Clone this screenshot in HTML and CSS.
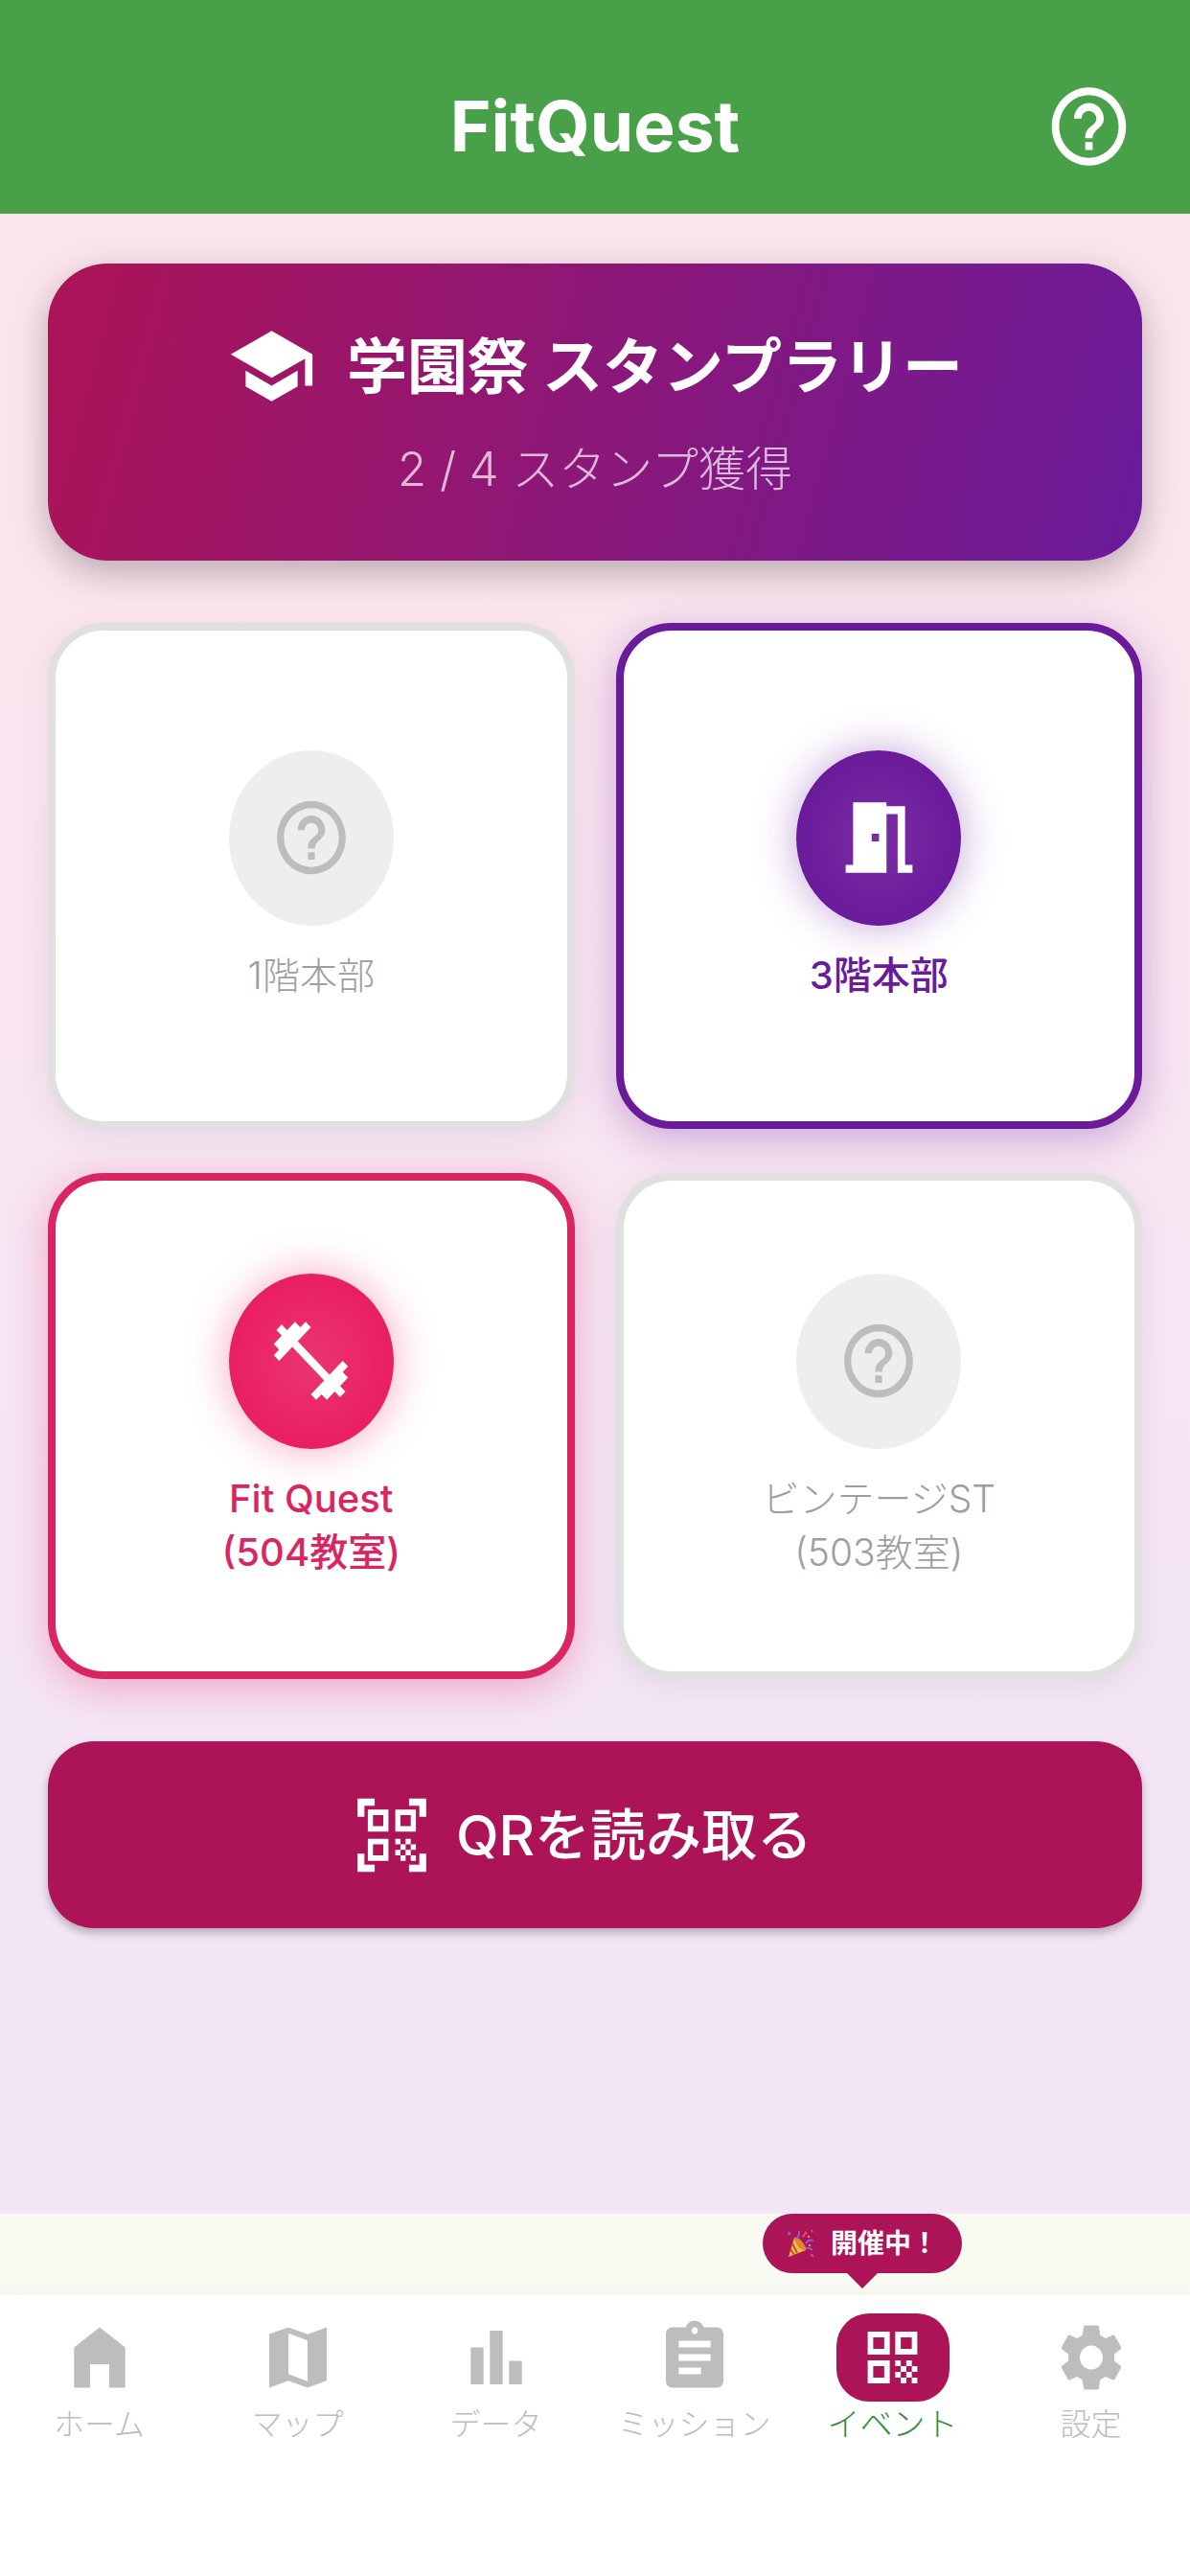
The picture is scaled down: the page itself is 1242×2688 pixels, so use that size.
FILE: index.html
```html
<!DOCTYPE html>
<html lang="ja">
<head>
  <meta charset="utf-8">
  <meta name="viewport" content="width=device-width, initial-scale=1">
  <title>FitQuest</title>
  <link rel="stylesheet" href="styles.css">
</head>
<body>
  <svg class="symbols" aria-hidden="true">
    <symbol id="help" viewBox="0 0 24 24" preserveAspectRatio="none"><path d="M11 18h2v-2h-2v2zm1-16C6.48 2 2 6.48 2 12s4.48 10 10 10 10-4.48 10-10S17.52 2 12 2zm0 18c-4.41 0-8-3.59-8-8s3.59-8 8-8 8 3.590 8 8-3.590 8-8 8zm0-14c-2.210 0-4 1.790-4 4h2c0-1.100.9-2 2-2s2 .9 2 2c0 2-3 1.750-3 5h2c0-2.250 3-2.500 3-5 0-2.210-1.790-4-4-4z"/></symbol>
  </svg>

  <header class="app-bar">
    <h1 class="app-title">FitQuest</h1>
    <button class="help-button" type="button" aria-label="ヘルプ">
      <svg class="icon-large" aria-hidden="true"><use href="#help"/></svg>
    </button>
  </header>

  <main class="content">
    <section class="hero">
      <h2 class="hero-title">
        <svg class="icon-large" viewBox="0 0 24 24" preserveAspectRatio="none" aria-hidden="true"><path d="M5 13.180v4L12 21l7-3.820v-4L12 17l-7-3.820zM12 3L1 9l11 6 9-4.910V17h2V9L12 3z"/></svg>
        <span>学園祭 スタンプラリー</span>
      </h2>
      <p class="hero-count">2 / 4 スタンプ獲得</p>
    </section>

    <section class="stamps">
      <article class="stamp">
        <div class="stamp-disc"><svg class="icon-locked" aria-hidden="true"><use href="#help"/></svg></div>
        <p class="stamp-label">1階本部</p>
      </article>
      <article class="stamp stamp-done stamp-purple">
        <div class="stamp-disc"><svg class="icon-large" viewBox="0 0 24 24" preserveAspectRatio="none" aria-hidden="true"><path d="M14 6v15H3v-2h2V3h9v1h5v15h2v2h-4V6h-3zm-4 5v2h2v-2h-2z"/></svg></div>
        <p class="stamp-label">3階本部</p>
      </article>
      <article class="stamp stamp-done stamp-pink">
        <div class="stamp-disc"><svg class="icon-large" viewBox="0 0 24 24" preserveAspectRatio="none" aria-hidden="true"><path d="M20.570 14.860L22 13.430 20.570 12 17 15.570 8.430 7 12 3.430 10.570 2 9.140 3.430 7.710 2 5.570 4.140 4.140 2.710 2.710 4.140l1.430 1.430L2 7.710l1.430 1.430L2 10.570 3.430 12 7 8.430 15.570 17 12 20.570 13.430 22l1.430-1.430L16.290 22l2.140-2.140 1.430 1.430 1.430-1.430-1.430-1.430L22 16.290z"/></svg></div>
        <p class="stamp-label">Fit Quest<br>(504教室)</p>
      </article>
      <article class="stamp">
        <div class="stamp-disc"><svg class="icon-locked" aria-hidden="true"><use href="#help"/></svg></div>
        <p class="stamp-label">ビンテージST<br>(503教室)</p>
      </article>
    </section>

    <button class="scan-button" type="button">
      <svg class="icon-locked" viewBox="0 0 24 24" preserveAspectRatio="none" aria-hidden="true"><path d="M9.500 6.500v3h-3v-3h3M11 5H5v6h6V5zm-1.500 9.500v3h-3v-3h3M11 13H5v6h6v-6zm6.500-6.500v3h-3v-3h3M19 5h-6v6h6V5zm-6 8h1.500v1.500H13V13zm1.500 1.500H16V16h-1.500v-1.500zM16 13h1.500v1.500H16V13zm-3 3h1.500v1.500H13V16zm1.500 1.500H16V19h-1.500v-1.500zM16 16h1.500v1.500H16V16zm1.500-1.500H19V16h-1.500v-1.500zm0 3H19V19h-1.500v-1.500zM22 7h-2V4h-3V2h5v5zm0 15v-5h-2v3h-3v2h5zM2 22h5v-2H4v-3H2v5zM2 2v5h2V4h3V2H2z"/></svg>
      <span>QRを読み取る</span>
    </button>
  </main>

  <nav class="tabs">
    <a class="tab" href="#home">
      <span class="tab-icon"><svg class="icon-tab" viewBox="0 0 24 24" preserveAspectRatio="none" aria-hidden="true"><path d="M4 21V9l8-6 8 6v12h-5v-7H9v7z"/></svg></span>
      <span class="tab-label">ホーム</span>
    </a>
    <a class="tab" href="#map">
      <span class="tab-icon"><svg class="icon-tab" viewBox="0 0 24 24" preserveAspectRatio="none" aria-hidden="true"><path fill-rule="evenodd" d="M3 21V5l6-2 6 2.100L21 3v15.900L15 21l-6-2.100zM9 4.800v12.100l6 2.200V6.900z"/></svg></span>
      <span class="tab-label">マップ</span>
    </a>
    <a class="tab" href="#data">
      <span class="tab-icon"><svg class="icon-tab" viewBox="0 0 24 24" preserveAspectRatio="none" aria-hidden="true"><path d="M4 9h4v11H4zM10 4h4v16h-4zM16 13h4v7h-4z"/></svg></span>
      <span class="tab-label">データ</span>
    </a>
    <a class="tab" href="#missions">
      <span class="tab-icon"><svg class="icon-tab" viewBox="0 0 24 24" preserveAspectRatio="none" aria-hidden="true"><path d="M19 3h-4.180C14.400 1.840 13.300 1 12 1c-1.300 0-2.400.84-2.820 2H5c-1.100 0-2 .9-2 2v14c0 1.100.9 2 2 2h14c1.100 0 2-.9 2-2V5c0-1.100-.9-2-2-2zm-7 0c.55 0 1 .45 1 1s-.45 1-1 1-1-.45-1-1 .45-1 1-1zm2 14H7v-2h7v2zm3-4H7v-2h10v2zm0-4H7V7h10v2z"/></svg></span>
      <span class="tab-label">ミッション</span>
    </a>
    <a class="tab tab-active" href="#event" aria-current="page">
      <span class="badge">
        <svg class="badge-icon" viewBox="0 0 30 30" aria-hidden="true">
          <path d="M2 29L8 9q9 4 12 13z" fill="#f9b84a"/>
          <path d="M6 15l5 10M4 21l4 6" stroke="#a85c2a" stroke-width="2" fill="none"/>
          <path d="M8 9q3-2 8 4t4 9q-4 1-8-4T8 9z" fill="#d98a2b"/>
          <path d="M10 10q4-3 3-8M20 15q3-5 8-3M20 20q4-1 7 2" stroke="#8b5bd6" stroke-width="2" fill="none"/>
          <path d="M19 3l2 2M26 1l1 2M25 27l3 1M17 8l2-3" stroke="#f0506e" stroke-width="2"/>
          <path d="M1 2l4 3-3 2z" fill="#4f7de0"/>
          <circle cx="23" cy="8" r="1" fill="#ffd04c"/><circle cx="24" cy="17" r="1" fill="#ffd04c"/>
        </svg>
        <span>開催中！</span>
      </span>
      <span class="tab-icon tab-pill"><svg class="icon-pill" viewBox="0 0 24 24" preserveAspectRatio="none" aria-hidden="true"><path d="M3 11h8V3H3v8zm2-6h4v4H5V5zM3 21h8v-8H3v8zm2-6h4v4H5v-4zM13 3v8h8V3h-8zm6 6h-4V5h4v4zM19 19h2v2h-2zM13 13h2v2h-2zM15 15h2v2h-2zM13 17h2v2h-2zM15 19h2v2h-2zM17 17h2v2h-2zM17 13h2v2h-2zM19 15h2v2h-2z"/></svg></span>
      <span class="tab-label">イベント</span>
    </a>
    <a class="tab" href="#settings">
      <span class="tab-icon"><svg class="icon-tab" viewBox="0 0 24 24" preserveAspectRatio="none" aria-hidden="true"><path d="M19.140 12.940c.04-.3.06-.61.06-.94 0-.32-.02-.64-.07-.94l2.030-1.580c.18-.14.23-.41.12-.61l-1.920-3.320c-.12-.22-.37-.29-.59-.22l-2.390.96c-.5-.38-1.030-.7-1.620-.94l-.36-2.540c-.04-.24-.24-.41-.48-.41h-3.840c-.24 0-.43.17-.47.41l-.36 2.540c-.59.24-1.130.57-1.620.94l-2.390-.96c-.22-.08-.47 0-.59.22L2.740 8.870c-.12.21-.08.47.12.61l2.030 1.580c-.05.3-.09.63-.09.94s.02.64.07.94l-2.030 1.580c-.18.14-.23.41-.12.61l1.920 3.320c.12.22.37.29.59.22l2.390-.96c.5.38 1.030.7 1.620.94l.36 2.540c.05.24.24.41.48.41h3.840c.24 0 .44-.17.47-.41l.36-2.540c.59-.24 1.130-.56 1.620-.94l2.390.96c.22.08.47 0 .59-.22l1.920-3.320c.12-.22.07-.47-.12-.61l-2.010-1.580zM12 15.600c-1.980 0-3.600-1.620-3.600-3.600s1.620-3.600 3.600-3.600 3.600 1.620 3.600 3.600-1.620 3.600-3.600 3.600z"/></svg></span>
      <span class="tab-label">設定</span>
    </a>
  </nav>
</body>
</html>
```
FILE: styles.css
```css
:root {
  --magenta: #ad1457;
  --purple: #6a1b9a;
  --pink: #e91e63;
  --icon-grey: #bdbdbd;
}

* {
  box-sizing: border-box;
}

body {
  margin: 0;
  min-height: 100vh;
  display: flex;
  flex-direction: column;
  background: #f8fbf2;
  font-family: Inter, "Noto Sans CJK JP", sans-serif;
}

h1,
h2,
p {
  margin: 0;
}

button {
  border: 0;
  font: inherit;
  color: inherit;
  cursor: pointer;
}

svg {
  display: block;
  fill: currentColor;
  flex: none;
}

.symbols {
  position: absolute;
  width: 0;
  height: 0;
}

.icon-large {
  width: 93px;
  height: 98px;
}

.icon-locked {
  width: 86px;
  height: 92px;
}

.icon-tab {
  width: 80px;
  height: 84px;
}

.icon-pill {
  width: 69px;
  height: 72px;
}

/* App bar */

.app-bar {
  display: grid;
  grid-template-columns: 1fr auto 1fr;
  align-items: center;
  padding: 44px 59px 4px;
  min-height: 223px;
  background: #48a148;
  color: #fff;
}

.app-title {
  grid-column: 2;
  font-size: 73px;
  line-height: 88px;
  font-weight: 700;
}

.help-button {
  justify-self: end;
  padding: 0;
  background: none;
}

/* Page content */

.content {
  flex: 1;
  display: flex;
  flex-direction: column;
  gap: 65px;
  padding: 52px 50px;
  background: linear-gradient(#fce4ec, #f3e5f5 80%);
}

.hero {
  display: flex;
  flex-direction: column;
  align-items: center;
  gap: 24px;
  padding: 58px 32px 60px;
  border-radius: 62px;
  background: linear-gradient(105deg, var(--magenta), var(--purple));
  box-shadow: 0 12px 36px rgba(0, 0, 0, 0.26);
  color: #fff;
}

.hero-title {
  display: flex;
  align-items: center;
  gap: 32px;
  font-size: 63px;
  line-height: 98px;
  font-weight: 700;
}

.hero-count {
  font-size: 49px;
  line-height: 70px;
  font-weight: 300;
  color: rgba(255, 255, 255, 0.7);
}

/* Stamp cards */

.stamps {
  display: grid;
  grid-template-columns: 1fr 1fr;
  gap: 46px 43px;
}

.stamp {
  display: flex;
  flex-direction: column;
  align-items: center;
  justify-content: center;
  gap: 24px;
  min-height: 528px;
  border: 8px solid #e0e0e0;
  border-radius: 58px;
  background: #fff;
  box-shadow: 0 8px 32px rgba(0, 0, 0, 0.06);
  color: #9e9e9e;
}

.stamp-disc {
  display: grid;
  place-items: center;
  width: 172px;
  height: 183px;
  border-radius: 50%;
  background: #eee;
  color: var(--icon-grey);
}

.stamp-label {
  font-size: 39px;
  line-height: 56px;
  font-weight: 300;
  text-align: center;
}

.stamp-done .stamp-label {
  font-size: 40px;
  font-weight: 500;
}

.stamp-done .stamp-disc {
  color: #fff;
}

.stamp-purple {
  border-color: var(--purple);
  box-shadow: 0 10px 40px rgba(106, 27, 154, 0.3);
  color: var(--purple);
}

.stamp-purple .stamp-disc {
  background: radial-gradient(#7b2da3, var(--purple) 70%);
  box-shadow: 0 0 44px rgba(106, 27, 154, 0.4);
}

.stamp-pink {
  border-color: #d92662;
  box-shadow: 0 10px 40px rgba(233, 30, 99, 0.3);
  color: #d92662;
}

.stamp-pink .stamp-disc {
  background: radial-gradient(#eb3573, var(--pink) 70%);
  box-shadow: 0 0 44px rgba(233, 30, 99, 0.4);
}

/* Scan button */

.scan-button {
  display: flex;
  align-items: center;
  justify-content: center;
  gap: 24px;
  min-height: 195px;
  padding: 32px 60px 32px 32px;
  border-radius: 48px;
  background: var(--magenta);
  box-shadow: 0 5px 10px rgba(0, 0, 0, 0.26);
  color: #fff;
  font-size: 58px;
  line-height: 80px;
  font-weight: 500;
}

/* Bottom tabs */

.tabs {
  display: grid;
  grid-template-columns: repeat(6, 1fr);
  margin-top: 85px;
  padding: 19px 0 134px;
  background: #fff;
  box-shadow: 0 0 24px rgba(0, 0, 0, 0.04);
}

.tab {
  position: relative;
  display: flex;
  flex-direction: column;
  align-items: center;
  color: var(--icon-grey);
  text-decoration: none;
}

.tab-icon {
  display: grid;
  place-items: center;
  height: 92px;
}

.tab-label {
  font-size: 32px;
  line-height: 48px;
  font-weight: 300;
  white-space: nowrap;
}

.tab-pill {
  width: 118px;
  border-radius: 34px;
  background: var(--magenta);
  color: #fff;
}

.tab-active {
  color: #388e3c;
}

.tab-active .tab-label {
  font-size: 34px;
}

.badge {
  position: absolute;
  right: 31px;
  bottom: 100%;
  margin-bottom: 42px;
  display: flex;
  align-items: center;
  gap: 16px;
  padding: 8px 25px;
  border-radius: 31px;
  background: var(--magenta);
  color: #fff;
  font-size: 28px;
  line-height: 46px;
  font-weight: 700;
  white-space: nowrap;
}

.badge::after {
  content: "";
  position: absolute;
  top: 100%;
  left: 50%;
  margin-left: -16px;
  border: 16px solid transparent;
  border-top-color: var(--magenta);
  border-bottom: 0;
}

.badge-icon {
  width: 30px;
  height: 30px;
}
```
